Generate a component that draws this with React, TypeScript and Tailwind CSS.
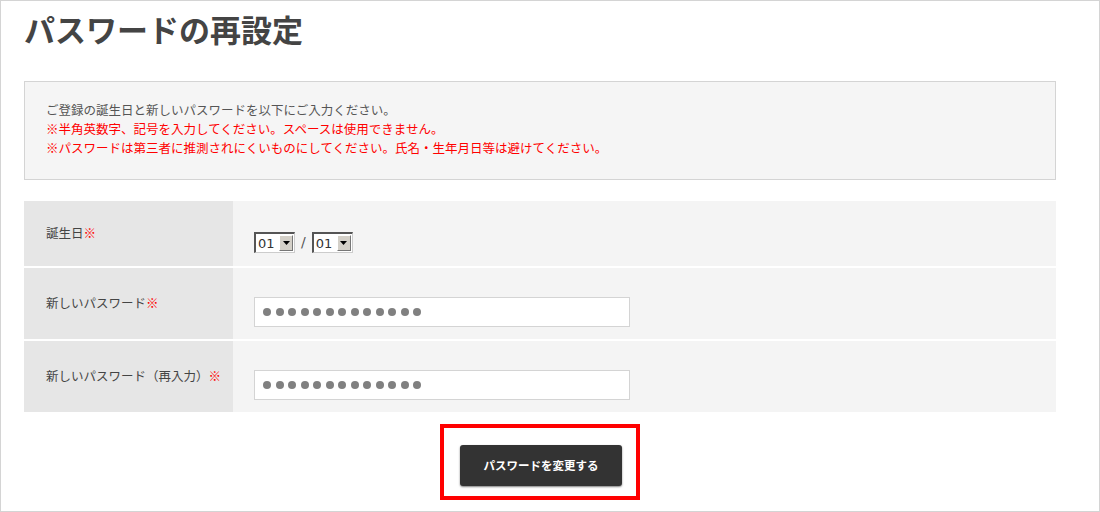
const JP = "font-['Meiryo','Noto_Sans_CJK_JP','Noto_Sans',sans-serif]";

function Mark() {
  return <span className="text-[#ff0000]">※</span>;
}

function FakeSelect({ value }: { value: string }) {
  return (
    <div className="flex h-[21px] w-[41px] items-center border-t-2 border-l-2 border-t-[#555] border-l-[#555] border-r border-b border-r-[#ccc] border-b-[#ccc] bg-white">
      <span className="flex-1 pl-[2px] font-['DejaVu_Sans',sans-serif] text-[13px] leading-none text-[#333]">{value}</span>
      <span className="mr-[1px] flex h-[16px] w-[14px] items-center justify-center border border-t-white border-l-white border-r-[#777] border-b-[#777] bg-[#d4d0c8]">
        <svg width="7" height="4" viewBox="0 0 7 4">
          <path d="M0 0h7L3.5 4z" fill="#000" />
        </svg>
      </span>
    </div>
  );
}

function PasswordBox() {
  return (
    <div className="flex h-[30px] w-[376px] items-center gap-[4.5px] border border-[#d4d4d4] bg-white pl-[8px]">
      {Array.from({ length: 13 }).map((_, i) => (
        <span key={i} className="h-[8px] w-[8px] rounded-full bg-[#808080]" />
      ))}
    </div>
  );
}

function Row({ label, top, height, children }: { label: React.ReactNode; top: string; height: string; children: React.ReactNode }) {
  return (
    <div className={`flex ${height}`}>
      <div className="flex w-[209px] shrink-0 items-center bg-[#e6e6e6] pl-[22px] text-[12.5px] text-[#444]">{label}</div>
      <div className={`flex-1 bg-[#f4f4f4] pl-[21px] ${top}`}>{children}</div>
    </div>
  );
}

export default function App() {
  return (
    <div className={`h-[512px] w-[1100px] overflow-hidden border border-[#d4d4d4] bg-white ${JP}`}>
      <h1 className="pl-[23px] pt-[8px] text-[31px] font-bold leading-[40px] text-[#444]">パスワードの再設定</h1>

      <div className="mt-[32px] ml-[23px] w-[1032px] border border-[#d4d4d4] bg-[#f5f5f5] pl-[21px] pt-[18px] pb-[22px] text-[12.5px] leading-[19px]">
        <p className="text-[#555]">ご登録の誕生日と新しいパスワードを以下にご入力ください。</p>
        <p className="text-[#ff0000]">※半角英数字、記号を入力してください。スペースは使用できません。</p>
        <p className="text-[#ff0000]">※パスワードは第三者に推測されにくいものにしてください。氏名・生年月日等は避けてください。</p>
      </div>

      <div className="mt-[21px] ml-[23px] w-[1032px]">
        <div className="flex flex-col gap-[2px]">
          <Row label={<span>誕生日<Mark /></span>} top="pt-[31px]" height="h-[65px]">
            <div className="flex items-center gap-[6px]">
              <FakeSelect value="01" />
              <span className="font-['DejaVu_Sans',sans-serif] text-[14px] text-[#555]">/</span>
              <FakeSelect value="01" />
            </div>
          </Row>
          <Row label={<span>新しいパスワード<Mark /></span>} top="pt-[29px]" height="h-[71px]">
            <PasswordBox />
          </Row>
          <Row label={<span>新しいパスワード（再入力）<Mark /></span>} top="pt-[29px]" height="h-[71px]">
            <PasswordBox />
          </Row>
        </div>

        <div className="mt-[12px] flex justify-center">
          <div className="border-4 border-[#ff0000] pt-[17px] pb-[10px] pl-[16px] pr-[14px]">
            <button
              type="button"
              className="h-[41px] w-[162px] rounded-[3px] bg-[#333] text-[11.5px] font-bold text-white shadow-[0_1px_2px_rgba(0,0,0,0.5)]"
            >
              パスワードを変更する
            </button>
          </div>
        </div>
      </div>
    </div>
  );
}
